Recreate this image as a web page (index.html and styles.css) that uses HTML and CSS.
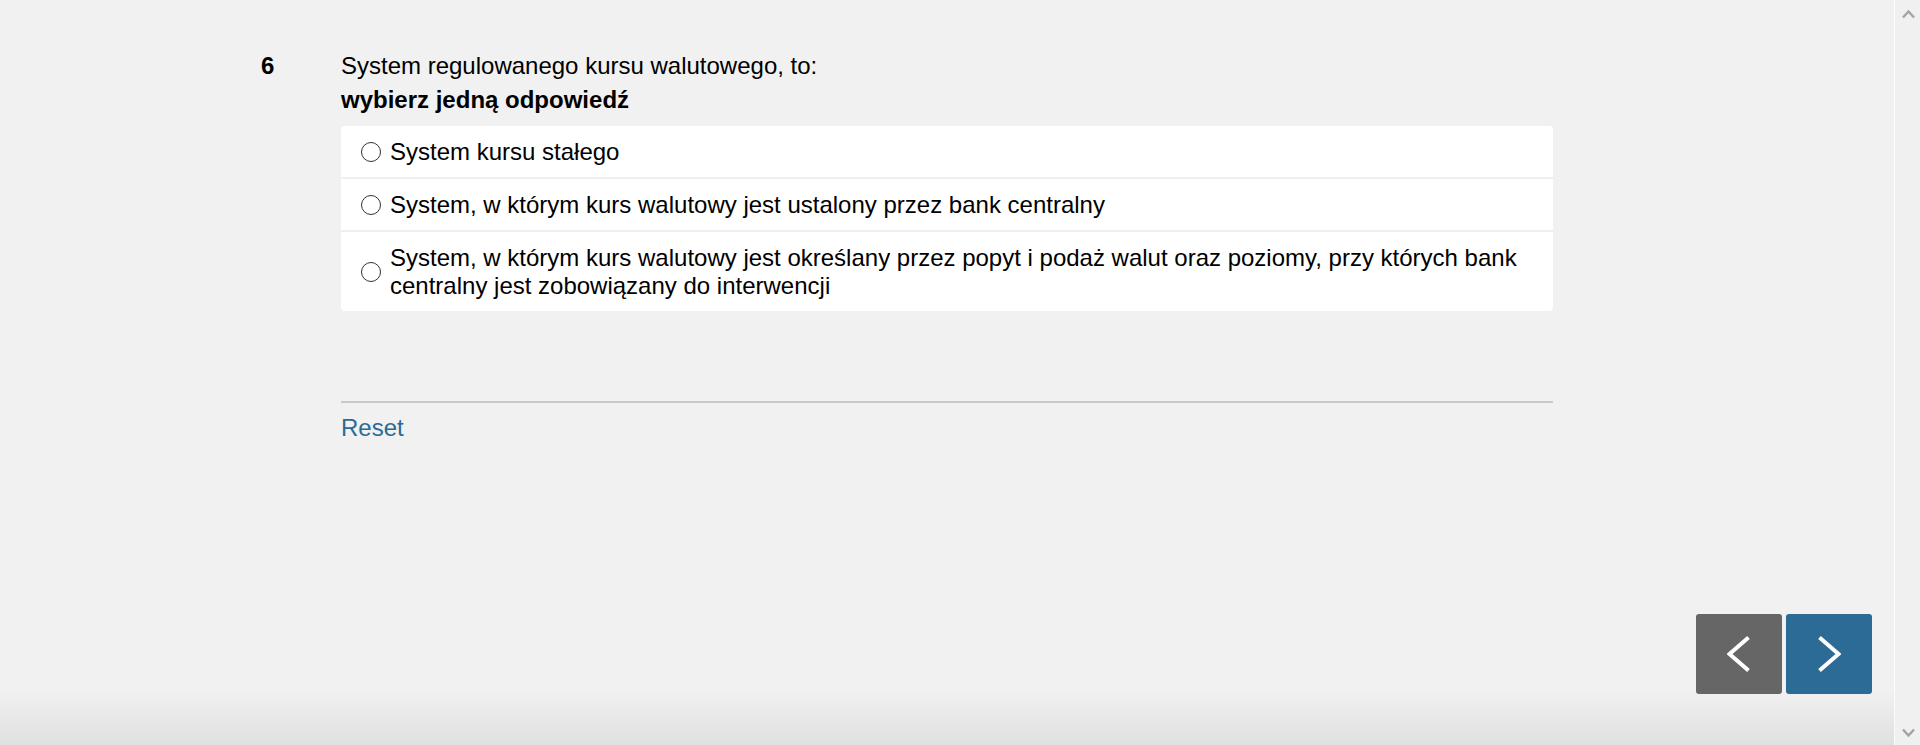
FILE: index.html
```html
<!DOCTYPE html>
<html lang="pl">
<head>
<meta charset="utf-8">
<title>Pytanie 6</title>
<link rel="stylesheet" href="styles.css">
</head>
<body>
<div class="app">
  <div class="page">
    <main class="main">
      <section class="question">
        <div class="qhead">
          <div class="qnum">6</div>
          <div class="qtext">System regulowanego kursu walutowego, to:</div>
        </div>
        <div class="qhint">wybierz jedną odpowiedź</div>
        <div class="answers">
          <label class="answer"><input type="radio" name="q6" class="radio"><span>System kursu stałego</span></label>
          <label class="answer"><input type="radio" name="q6" class="radio"><span>System, w którym kurs walutowy jest ustalony przez bank centralny</span></label>
          <label class="answer"><input type="radio" name="q6" class="radio"><span>System, w którym kurs walutowy jest określany przez popyt i podaż walut oraz poziomy, przy których bank centralny jest zobowiązany do interwencji</span></label>
        </div>
        <div class="divider"></div>
        <a class="reset" href="#">Reset</a>
      </section>
    </main>
    <footer class="footer">
      <button class="nav nav-prev" aria-label="Poprzednie">
        <svg width="24" height="36" viewBox="0 0 24 36"><polyline points="21.5,1.5 2.5,18 21.5,34.5" fill="none" stroke="#fff" stroke-width="4"/></svg>
      </button>
      <button class="nav nav-next" aria-label="Następne">
        <svg width="24" height="36" viewBox="0 0 24 36"><polyline points="2.5,1.5 21.5,18 2.5,34.5" fill="none" stroke="#fff" stroke-width="4"/></svg>
      </button>
    </footer>
  </div>
  <div class="scrollbar">
    <svg class="sb-arrow" width="13" height="10" viewBox="0 0 13 10"><polyline points="1,8.5 6.5,2.5 12,8.5" fill="none" stroke="#a3a3a3" stroke-width="2.4"/></svg>
    <svg class="sb-arrow" width="13" height="10" viewBox="0 0 13 10"><polyline points="1,1.5 6.5,7.5 12,1.5" fill="none" stroke="#a3a3a3" stroke-width="2.4"/></svg>
  </div>
</div>
</body>
</html>
```
FILE: styles.css
```css
* { box-sizing: border-box; }
html, body { margin: 0; height: 100%; }
body {
  font-family: "Liberation Sans", Arial, sans-serif;
  font-size: 24px;
  color: #000;
  background: #f1f1f1;
}
.app {
  display: flex;
  height: 100vh;
}
.page {
  flex: 1;
  display: flex;
  flex-direction: column;
  background: linear-gradient(to bottom, #f1f1f1 0, #f1f1f1 calc(100% - 55px), #e0e0e0 100%);
}
.main {
  flex: 1;
}
.question {
  width: 1212px;
  margin: 0 auto;
  padding-top: 52px;
}
.qhead {
  display: flex;
}
.qnum {
  width: 80px;
  margin-left: -80px;
  font-weight: bold;
}
.qtext {
  line-height: normal;
}
.qhint {
  font-weight: bold;
  margin-top: 6px;
}
.answers {
  margin-top: 12px;
  background: #fff;
  border-radius: 4px;
}
.answer {
  display: flex;
  align-items: center;
  padding: 11.5px 20px 11.5px 20px;
  line-height: normal;
  cursor: pointer;
}
.answer + .answer {
  border-top: 2px solid #efefef;
}
.radio {
  appearance: none;
  -webkit-appearance: none;
  flex: none;
  width: 20px;
  height: 20px;
  margin: 0 9px 0 0;
  border: 1px solid #333;
  border-radius: 50%;
  background: #fff;
}
.divider {
  margin-top: 90px;
  height: 2px;
  background: #c9c9c9;
}
.reset {
  display: inline-block;
  margin-top: 11px;
  color: #2b6a97;
  text-decoration: none;
}
.footer {
  display: flex;
  justify-content: flex-end;
  gap: 4px;
  padding: 0 22px 51px 0;
}
.nav {
  width: 86px;
  height: 80px;
  border: 0;
  border-radius: 3px;
  padding: 0;
  display: flex;
  align-items: center;
  justify-content: center;
  cursor: pointer;
}
.nav-prev { background: #666666; }
.nav-next { background: #2b6b96; }
.scrollbar {
  width: 26px;
  flex: none;
  border-left: 1px solid #fbfbfb;
  background: #f0f0f0;
  display: flex;
  flex-direction: column;
  justify-content: space-between;
  align-items: center;
  padding: 9px 0 7px 1px;
}
```
